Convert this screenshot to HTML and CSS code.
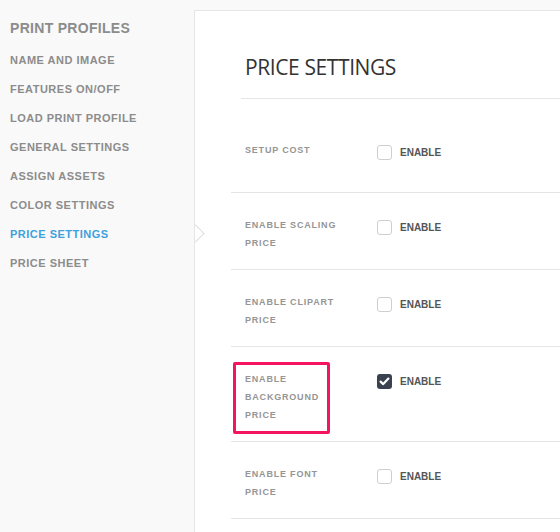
FILE: index.html
```html
<!DOCTYPE html>
<html>
<head>
<meta charset="utf-8">
<link rel="stylesheet" href="styles.css">
</head>
<body>
<div class="page">
  <aside class="sidebar">
    <div class="side-title">PRINT PROFILES</div>
    <ul class="side-nav">
      <li>NAME AND IMAGE</li>
      <li>FEATURES ON/OFF</li>
      <li>LOAD PRINT PROFILE</li>
      <li>GENERAL SETTINGS</li>
      <li>ASSIGN ASSETS</li>
      <li>COLOR SETTINGS</li>
      <li class="active">PRICE SETTINGS</li>
      <li>PRICE SHEET</li>
    </ul>
  </aside>
  <main class="panel">
    <div class="panel-head">
      <h1>PRICE SETTINGS</h1>
    </div>
    <div class="row first">
      <div class="label">SETUP COST</div>
      <label class="control"><span class="box"></span><span class="enable">ENABLE</span></label>
    </div>
    <div class="row">
      <div class="label">ENABLE SCALING PRICE</div>
      <label class="control"><span class="box"></span><span class="enable">ENABLE</span></label>
    </div>
    <div class="row">
      <div class="label">ENABLE CLIPART PRICE</div>
      <label class="control"><span class="box"></span><span class="enable">ENABLE</span></label>
    </div>
    <div class="row">
      <div class="label highlight">ENABLE BACKGROUND PRICE</div>
      <label class="control"><span class="box checked"><svg viewBox="0 0 15 15" width="15" height="15"><path d="M3.6 7.6 L6.2 10.1 L11.4 4.6" fill="none" stroke="#fff" stroke-width="2.2" stroke-linecap="round" stroke-linejoin="round"/></svg></span><span class="enable">ENABLE</span></label>
    </div>
    <div class="row">
      <div class="label">ENABLE FONT PRICE</div>
      <label class="control"><span class="box"></span><span class="enable">ENABLE</span></label>
    </div>
  </main>
</div>
</body>
</html>
```
FILE: styles.css
```css
html, body {
  margin: 0;
  padding: 0;
  background: #f9f9f9;
  overflow: hidden;
}
.page {
  display: flex;
  width: 560px;
  height: 532px;
  font-family: "Liberation Sans", Arial, sans-serif;
}
.sidebar {
  width: 194px;
  flex: none;
  padding-top: 18px;
  box-sizing: border-box;
}
.side-title {
  padding-left: 10px;
  font-size: 14px;
  line-height: 20px;
  font-weight: bold;
  letter-spacing: 0.3px;
  color: #8c8c8c;
}
.side-nav {
  list-style: none;
  margin: 8px 0 0;
  padding: 0;
}
.side-nav li {
  position: relative;
  padding-left: 10px;
  font-size: 11px;
  line-height: 29px;
  font-weight: bold;
  letter-spacing: 0.5px;
  color: #8c8c8c;
}
.side-nav li.active {
  color: #3ea1dc;
}
.side-nav li.active::after {
  content: "";
  position: absolute;
  z-index: 1;
  left: 189px;
  top: 7px;
  width: 12px;
  height: 12px;
  border-top: 1px solid #dedede;
  border-right: 1px solid #dedede;
  transform: rotate(45deg);
}
.panel {
  flex: 1;
  margin-top: 10px;
  background: #fff;
  border-top: 1px solid #e5e5e5;
  border-left: 1px solid #e5e5e5;
  padding-left: 36px;
}
.panel-head {
  margin-left: 10px;
  padding: 41px 0 16px 4px;
  border-bottom: 1px solid #e5e5e5;
}
.panel-head h1 {
  margin: 0;
  font-family: "Open Sans", sans-serif;
  font-weight: normal;
  font-size: 21px;
  line-height: 30px;
  letter-spacing: -0.4px;
  color: #333;
}
.row {
  display: flex;
  align-items: flex-start;
  padding: 23px 0 17px 14px;
  border-bottom: 1px solid #e5e5e5;
}
.row.first {
  padding-top: 42px;
  padding-bottom: 32px;
}
.label {
  position: relative;
  width: 100px;
  flex: none;
  font-size: 9px;
  line-height: 18px;
  font-weight: bold;
  letter-spacing: 0.8px;
  color: #959595;
}
.label.highlight::after {
  content: "";
  position: absolute;
  left: -12px;
  top: -8px;
  width: 91px;
  bottom: -10px;
  border: 3px solid #f5145f;
  border-radius: 2px;
}
.control {
  display: flex;
  align-items: center;
  gap: 8px;
  margin-left: 32px;
  margin-top: 4px;
}
.box {
  display: block;
  width: 13px;
  height: 13px;
  border: 1px solid #cfcfcf;
  border-radius: 3px;
  background: #fff;
}
.box.checked {
  width: 15px;
  height: 15px;
  border: none;
  background: #39424e;
}
.box svg {
  display: block;
}
.enable {
  font-size: 10px;
  font-weight: bold;
  color: #555;
}
```
